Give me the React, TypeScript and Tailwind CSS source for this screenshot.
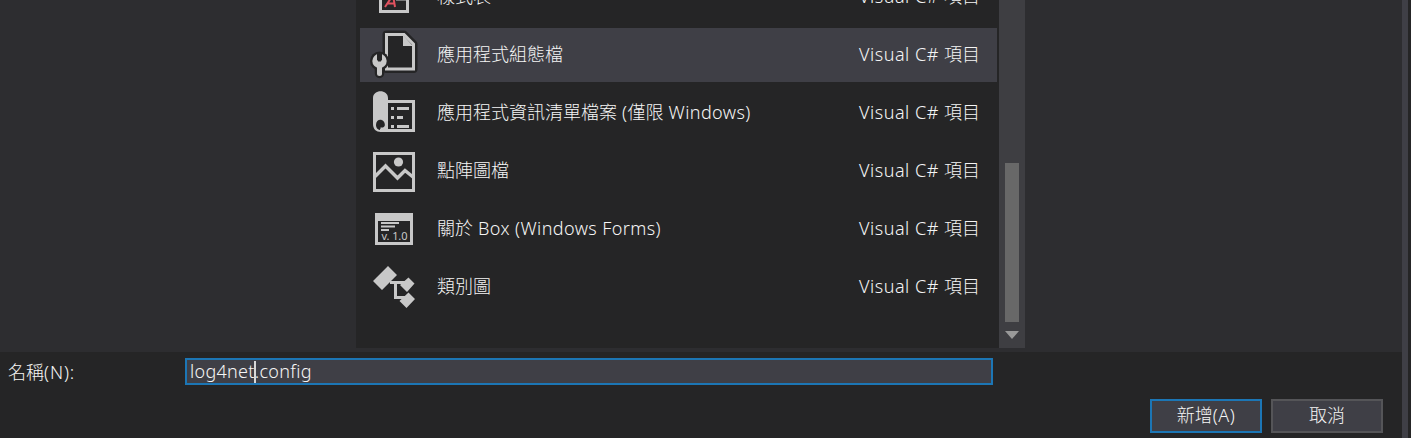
import type { ReactNode } from "react";

const G = "#c8c8c8";
const D = "#252526";

function StyleIcon() {
  return (
    <svg width="60" height="58" viewBox="0 0 60 58">
      <path d="M20.500 10H47.500V43.500H20.500Z" fill={D} stroke={G} strokeWidth="3" />
      <path d="M36 31.500H46" stroke={G} strokeWidth="2" />
      <path d="M25 39L33 27L35 39M27.500 35.500H34" fill="none" stroke="#e0525f" strokeWidth="2" />
    </svg>
  );
}

function ConfigIcon() {
  return (
    <svg width="60" height="58" viewBox="0 0 60 58">
      <path d="M26.500 8.500H44L53.500 18V43H26.500Z" fill="none" stroke={D} strokeWidth="8" strokeLinejoin="round" />
      <path d="M26.500 8.500H44L53.500 18V43H26.500Z" fill={D} stroke={G} strokeWidth="3" />
      <path d="M43 9V20H53Z" fill={G} />
      <circle cx="19.500" cy="35" r="9.500" fill={D} />
      <path d="M19.500 38V47.500" stroke={D} strokeWidth="9.500" strokeLinecap="round" />
      <circle cx="19.500" cy="35" r="7.200" fill={G} />
      <path d="M19.500 40V47.500" stroke={G} strokeWidth="5" strokeLinecap="round" />
      <path d="M17 26.500H22V33.500L20.800 35.500H18.200L17 33.500Z" fill={D} />
    </svg>
  );
}

function ManifestIcon() {
  return (
    <svg width="60" height="58" viewBox="0 0 60 58">
      <path d="M27 17.500H53.500V46.500H20" fill="none" stroke={G} strokeWidth="3" />
      <path d="M13 14C13 5 28 5 28 14V42H25C25 34 16 34 16 41C16 44 18 46 21 46V48C16 48 13 45 13 40Z" fill={G} />
      <path d="M25 40H28V45.500H20.500V43.500C23 44 25 43 25 40Z" fill={G} />
      <path d="M31 24.500H34M37 24.500H49M31 33.500H34M37 33.500H43M31 42.500H34M37 42.500H49" stroke={G} strokeWidth="3" />
    </svg>
  );
}

function BitmapIcon() {
  return (
    <svg width="60" height="58" viewBox="0 0 60 58">
      <path d="M14.500 11.500H53.500V48.500H14.500Z" fill="none" stroke={G} strokeWidth="3" />
      <path d="M15 34.500L25.500 24L37.500 36L45 28.500L53 35" fill="none" stroke={G} strokeWidth="3.500" />
      <circle cx="38.500" cy="20" r="4.600" fill={G} />
    </svg>
  );
}

function AboutIcon() {
  return (
    <svg width="60" height="58" viewBox="0 0 60 58">
      <path fillRule="evenodd" d="M15 13H53V45H15ZM18 21V42H50V21Z" fill={G} />
      <path d="M21 23H39M21 26.500H35M21 30H29" stroke={G} strokeWidth="2" />
      <text x="21.500" y="40" fontSize="11" textLength="26" fontWeight="400" fontFamily="Noto Sans, sans-serif" fill={G}>v. 1.0</text>
    </svg>
  );
}

function DiagramIcon() {
  return (
    <svg width="60" height="58" viewBox="0 0 60 58">
      <path d="M28 8L37 17L22 32L13 23ZM48.500 19.500L54.500 25.500L47 34L40 27ZM48.500 34.500L55 41L46.500 50L39.500 43Z" fill={G} />
      <path d="M30 24.500H45M35.500 24V39.500H45" fill="none" stroke={G} strokeWidth="3" />
    </svg>
  );
}

function Label({ cjk, latin, tail = "" }: { cjk: string; latin?: string; tail?: string }) {
  return (
    <span className="whitespace-pre">
      {cjk}
      <span className="tracking-[0.4px]">{latin}</span>
      {tail}
    </span>
  );
}

function Row({ icon, label, selected = false }: { icon: ReactNode; label: ReactNode; selected?: boolean }) {
  return (
    <div className="flex h-[58px] shrink-0 items-center">
      <div className={`flex h-[54px] w-[637px] items-center justify-between pr-[17px] ${selected ? "bg-[#3f3f46]" : ""}`}>
        <div className="flex items-center">
          <div className="h-[58px] w-[60px]">{icon}</div>
          <div className="ml-[17px] pb-[2px]">{label}</div>
        </div>
        <div className="pb-[2px] whitespace-pre">
          <span className="tracking-[0.5px]">Visual C# </span>項目
        </div>
      </div>
    </div>
  );
}

export default function App() {
  return (
    <div className="flex h-[438px] w-[1411px] overflow-hidden bg-[#2d2d30] font-['Noto_Sans','Noto_Sans_CJK_TC',sans-serif] text-[18px] leading-[26px] font-light text-[#f5f5f5]">
      <div className="flex w-[1402px] flex-col">
        <div className="flex h-[352px] pl-[356px]">
          <div className="flex h-[348px] w-[643px] flex-col overflow-hidden bg-[#252526] pl-1">
            <div className="-mt-[32px] flex flex-col">
              <Row icon={<StyleIcon />} label={<Label cjk="樣式表" />} />
              <Row icon={<ConfigIcon />} label={<Label cjk="應用程式組態檔" />} selected />
              <Row
                icon={<ManifestIcon />}
                label={
                  <>
                    <Label cjk="應用程式資訊清單檔案" latin=" (" tail="僅限" />
                    <Label cjk="" latin=" Windows)" />
                  </>
                }
              />
              <Row icon={<BitmapIcon />} label={<Label cjk="點陣圖檔" />} />
              <Row icon={<AboutIcon />} label={<Label cjk="關於" latin=" Box (Windows Forms)" />} />
              <Row icon={<DiagramIcon />} label={<Label cjk="類別圖" />} />
            </div>
          </div>
          <div className="flex h-[348px] w-[26px] flex-col items-center bg-[#3e3e42] pt-[163px]">
            <div className="h-[159px] w-[14px] bg-[#686868]" />
            <svg className="mt-[9px]" width="14" height="8"><path d="M0 0H14L7 8Z" fill="#999999" /></svg>
          </div>
        </div>
        <div className="flex h-[86px] flex-col bg-[#252526] pt-[6px]">
          <div className="flex h-[27px] items-center">
            <span className="w-[185px] pl-2">名稱<span className="tracking-[0.9px]">(N):</span></span>
            <div className="flex h-[27px] w-[808px] items-center border-2 border-[#1c76b5] bg-[#3f3f46] pl-[3px] tracking-[0.3px]">
              <span className="pb-[2px]">log4net</span>
              <span className="-mx-px h-[22px] w-[2px] bg-[#d8d8d8]" />
              <span className="pb-[2px]">.config</span>
            </div>
          </div>
          <div className="mt-[14px] flex justify-end gap-[9px] pr-[19px]">
            <button className="h-[34px] w-[112px] border-2 border-[#1c76b5] bg-[#3f3f46] pb-[2px]">新增<span className="tracking-[0.5px]">(A)</span></button>
            <button className="h-[34px] w-[112px] border-2 border-[#555558] bg-[#3f3f46] pb-[2px]">取消</button>
          </div>
        </div>
      </div>
      <div className="w-[6px] bg-[#3f3f46]" />
      <div className="w-[3px] bg-[#252526]" />
    </div>
  );
}
